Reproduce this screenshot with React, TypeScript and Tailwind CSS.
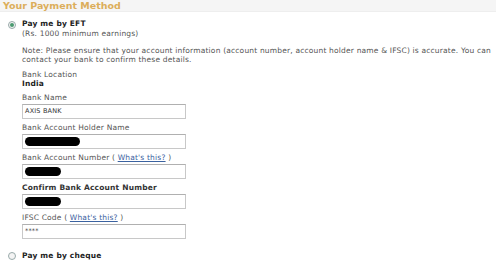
import React from "react";

const Field = ({ label, bold, link, value, redact }: { label: string; bold?: boolean; link?: boolean; value?: string; redact?: number }) => (
  <div className="flex flex-col">
    <div className={`h-[11px] leading-[11px] ${bold ? "font-bold text-[#333]" : "text-[#555]"}`}>
      {label}
      {link && (
        <>
          {" ( "}
          <span className="text-[#3b62a0] underline">What's this?</span>
          {" )"}
        </>
      )}
    </div>
    <div className="mt-[0.5px] w-[164px] h-[15px] border border-[#c8c8c8] border-t-[#b0b0b0] bg-white flex items-center px-[2px]">
      {value && <span className="text-[6.5px] text-[#333] leading-none">{value}</span>}
      {redact ? <div className="h-[9px] rounded-full bg-black" style={{ width: redact }} /> : null}
    </div>
  </div>
);

export default function App() {
  return (
    <div className="w-[500px] h-[260px] bg-white overflow-hidden text-[7.5px] tracking-[0.18px] text-[#444]" style={{ fontFamily: '"DejaVu Sans", Verdana, sans-serif' }}>
      <div className="w-[496px] h-[12px] bg-[#f5f5f5] border-b border-[#eeeeee] px-[3px] text-[9.5px] leading-[12px] font-bold tracking-normal text-[#dcae5a]">
        Your Payment Method
      </div>
      <div className="flex mt-[7px]">
        <div className="w-[22px] flex justify-center pt-[2px] pl-[1px]">
          <div className="w-[8px] h-[8px] rounded-full border border-[#9aa] bg-[#f4f4f4] flex items-center justify-center">
            <div className="w-[4px] h-[4px] rounded-full bg-[#4a9a70]" />
          </div>
        </div>
        <div className="flex flex-col">
          <div className="font-bold text-[#222] text-[7.5px] leading-[10px]">Pay me by EFT</div>
          <div className="leading-[9px] text-[#555]">(Rs. 1000 minimum earnings)</div>
          <div className="mt-[8px] leading-[9px] text-[#555] w-[476px]">
            Note: Please ensure that your account information (account number, account holder name &amp; IFSC) is accurate. You can contact your bank to confirm these details.
          </div>
          <div className="mt-[6px] leading-[9px] text-[#555]">Bank Location</div>
          <div className="leading-[9px] font-bold text-[#222]">India</div>
          <div className="mt-[4px] flex flex-col gap-[3.5px]">
            <Field label="Bank Name" value="AXIS BANK" />
            <Field label="Bank Account Holder Name" redact={55} />
            <Field label="Bank Account Number" link redact={36} />
            <Field label="Confirm Bank Account Number" bold redact={36} />
            <Field label="IFSC Code" link value="****" />
          </div>
        </div>
      </div>
      <div className="flex mt-[12px]">
        <div className="w-[22px] flex justify-center pt-[1px] pl-[1px]">
          <div className="w-[8px] h-[8px] rounded-full border border-[#9aa] bg-[#f4f4f4]" />
        </div>
        <div className="font-bold text-[#222] text-[7.5px] leading-[10px]">Pay me by cheque</div>
      </div>
    </div>
  );
}
